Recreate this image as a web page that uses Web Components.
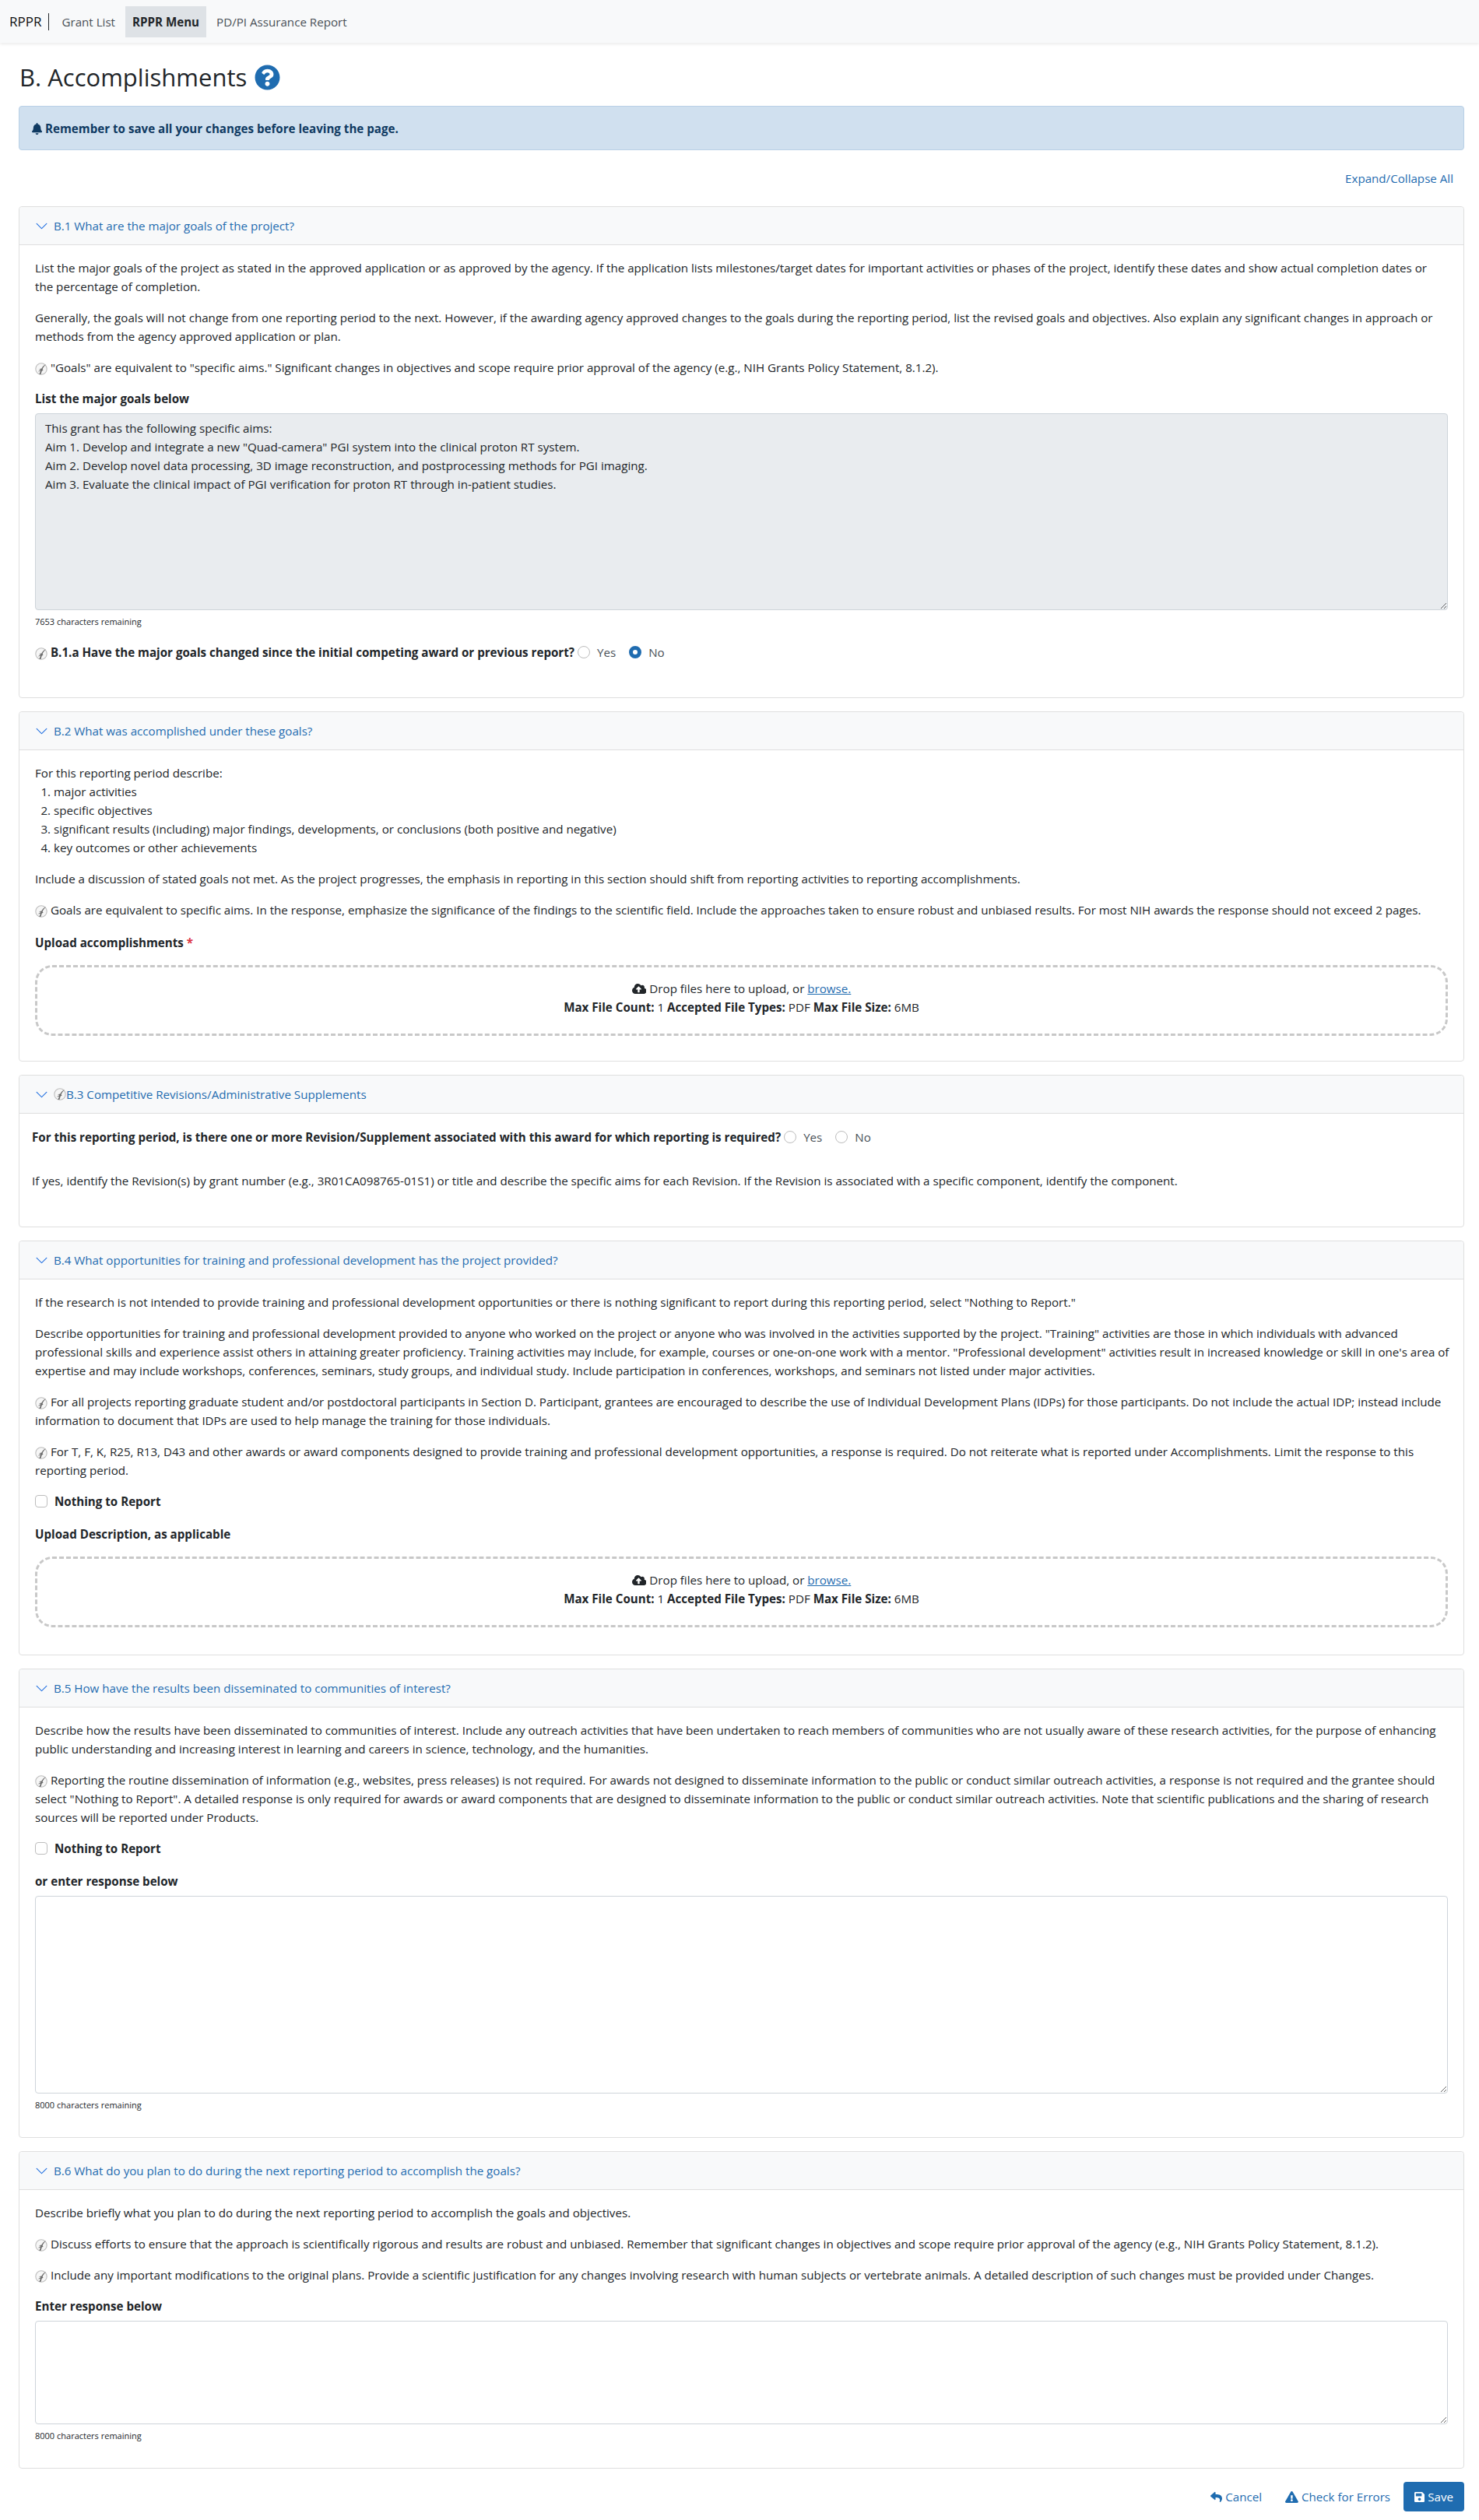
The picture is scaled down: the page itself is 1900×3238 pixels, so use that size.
<!DOCTYPE html>
<html lang="en">
<head>
<meta charset="utf-8">
<title>RPPR - B. Accomplishments</title>
<style>
  html, body { margin: 0; padding: 0; background: #fff; }
  body { font: 15.15px/24px "Open Sans", "Noto Sans", sans-serif; color: #212529; }
  main { display: block; padding: 0 19px 12px 24px; }
  acc-card p { margin: 0 0 16px; white-space: nowrap; }
  acc-card ol { margin: 0 0 16px; padding-left: 24px; }
  acc-card strong { font-weight: 700; }
  .label { font-weight: 700; margin-bottom: 7px; }
  .label.up { margin-bottom: 17px; }
  .req { color: #dc3545; }
</style>
</head>
<body>
<app-navbar></app-navbar>
<main>
  <page-title>B. Accomplishments</page-title>
  <page-alert>Remember to save all your changes before leaving the page.</page-alert>
  <expand-link>Expand/Collapse All</expand-link>

  <acc-card heading="B.1 What are the major goals of the project?">
    <p>List the major goals of the project as stated in the approved application or as approved by the agency. If the application lists milestones/target dates for important activities or phases of the project, identify these dates and show actual completion dates or<br>the percentage of completion.</p>
    <p>Generally, the goals will not change from one reporting period to the next. However, if the awarding agency approved changes to the goals during the reporting period, list the revised goals and objectives. Also explain any significant changes in approach or<br>methods from the agency approved application or plan.</p>
    <p><nih-mark></nih-mark> "Goals" are equivalent to "specific aims." Significant changes in objectives and scope require prior approval of the agency (e.g., NIH Grants Policy Statement, 8.1.2).</p>
    <div class="label">List the major goals below</div>
    <text-box rows-height="253" count="7653 characters remaining" disabled>This grant has the following specific aims:
Aim 1. Develop and integrate a new "Quad-camera" PGI system into the clinical proton RT system.
Aim 2. Develop novel data processing, 3D image reconstruction, and postprocessing methods for PGI imaging.
Aim 3. Evaluate the clinical impact of PGI verification for proton RT through in-patient studies.</text-box>
    <yes-no checked="no" style="margin:19px 0 30px"><nih-mark></nih-mark> B.1.a Have the major goals changed since the initial competing award or previous report?</yes-no>
  </acc-card>

  <acc-card heading="B.2 What was accomplished under these goals?">
    <div>For this reporting period describe:</div>
    <ol>
      <li>major activities</li>
      <li>specific objectives</li>
      <li>significant results (including) major findings, developments, or conclusions (both positive and negative)</li>
      <li>key outcomes or other achievements</li>
    </ol>
    <p>Include a discussion of stated goals not met. As the project progresses, the emphasis in reporting in this section should shift from reporting activities to reporting accomplishments.</p>
    <p style="margin-bottom:18px"><nih-mark></nih-mark> Goals are equivalent to specific aims. In the response, emphasize the significance of the findings to the scientific field. Include the approaches taken to ensure robust and unbiased results. For most NIH awards the response should not exceed 2 pages.</p>
    <div class="label up">Upload accomplishments <span class="req">*</span></div>
    <drop-zone style="margin-bottom:16px"></drop-zone>
  </acc-card>

  <acc-card heading="B.3 Competitive Revisions/Administrative Supplements" marked style="--inset:16px">
    <yes-no style="margin:1px 0 32px">For this reporting period, is there one or more Revision/Supplement associated with this award for which reporting is required?</yes-no>
    <p style="margin-bottom:31px">If yes, identify the Revision(s) by grant number (e.g., 3R01CA098765-01S1) or title and describe the specific aims for each Revision. If the Revision is associated with a specific component, identify the component.</p>
  </acc-card>

  <acc-card heading="B.4 What opportunities for training and professional development has the project provided?">
    <p>If the research is not intended to provide training and professional development opportunities or there is nothing significant to report during this reporting period, select "Nothing to Report."</p>
    <p>Describe opportunities for training and professional development provided to anyone who worked on the project or anyone who was involved in the activities supported by the project. "Training" activities are those in which individuals with advanced<br>professional skills and experience assist others in attaining greater proficiency. Training activities may include, for example, courses or one-on-one work with a mentor. "Professional development" activities result in increased knowledge or skill in one's area of<br>expertise and may include workshops, conferences, seminars, study groups, and individual study. Include participation in conferences, workshops, and seminars not listed under major activities.</p>
    <p><nih-mark></nih-mark> For all projects reporting graduate student and/or postdoctoral participants in Section D. Participant, grantees are encouraged to describe the use of Individual Development Plans (IDPs) for those participants. Do not include the actual IDP; instead include<br>information to document that IDPs are used to help manage the training for those individuals.</p>
    <p><nih-mark></nih-mark> For T, F, K, R25, R13, D43 and other awards or award components designed to provide training and professional development opportunities, a response is required. Do not reiterate what is reported under Accomplishments. Limit the response to this<br>reporting period.</p>
    <check-row>Nothing to Report</check-row>
    <div class="label" style="margin-bottom:17px">Upload Description, as applicable</div>
    <drop-zone style="margin-bottom:19px"></drop-zone>
  </acc-card>

  <acc-card heading="B.5 How have the results been disseminated to communities of interest?">
    <p>Describe how the results have been disseminated to communities of interest. Include any outreach activities that have been undertaken to reach members of communities who are not usually aware of these research activities, for the purpose of enhancing<br>public understanding and increasing interest in learning and careers in science, technology, and the humanities.</p>
    <p><nih-mark></nih-mark> Reporting the routine dissemination of information (e.g., websites, press releases) is not required. For awards not designed to disseminate information to the public or conduct similar outreach activities, a response is not required and the grantee should<br>select "Nothing to Report". A detailed response is only required for awards or award components that are designed to disseminate information to the public or conduct similar outreach activities. Note that scientific publications and the sharing of research<br>sources will be reported under Products.</p>
    <check-row>Nothing to Report</check-row>
    <div class="label">or enter response below</div>
    <text-box rows-height="254" count="8000 characters remaining" style="margin-bottom:17px"></text-box>
  </acc-card>

  <acc-card heading="B.6 What do you plan to do during the next reporting period to accomplish the goals?">
    <p>Describe briefly what you plan to do during the next reporting period to accomplish the goals and objectives.</p>
    <p><nih-mark></nih-mark> Discuss efforts to ensure that the approach is scientifically rigorous and results are robust and unbiased. Remember that significant changes in objectives and scope require prior approval of the agency (e.g., NIH Grants Policy Statement, 8.1.2).</p>
    <p><nih-mark></nih-mark> Include any important modifications to the original plans. Provide a scientific justification for any changes involving research with human subjects or vertebrate animals. A detailed description of such changes must be provided under Changes.</p>
    <div class="label">Enter response below</div>
    <text-box rows-height="133" count="8000 characters remaining" style="margin-bottom:17px"></text-box>
  </acc-card>

  <action-bar></action-bar>
</main>

<script>
// font awesome style glyphs, viewBox and path
const ICONS = {
  bell: ['0 0 448 512', 'M224 512c35.32 0 63.97-28.65 63.97-64H160.03c0 35.35 28.65 64 63.97 64zm215.39-149.71c-19.32-20.76-55.47-51.99-55.47-154.29 0-77.7-54.48-139.9-127.94-155.16V32c0-17.67-14.32-32-31.98-32s-31.98 14.33-31.98 32v20.84C118.56 68.1 64.08 130.3 64.08 208c0 102.3-36.15 133.53-55.47 154.29-6 6.45-8.66 14.16-8.61 21.71.11 16.4 12.98 32 32.1 32h383.8c19.12 0 32-15.6 32.1-32 .05-7.55-2.61-15.27-8.61-21.71z'],
  cloud: ['0 0 640 512', 'M537.6 226.6c4.1-10.7 6.4-22.4 6.4-34.6 0-53-43-96-96-96-19.7 0-38.1 6-53.3 16.2C367 64.2 315.3 32 256 32c-88.4 0-160 71.6-160 160 0 2.7.1 5.4.2 8.1C40.2 219.8 0 273.2 0 336c0 79.5 64.5 144 144 144h368c70.7 0 128-57.3 128-128 0-61.9-44-113.6-102.4-125.4zM393.4 288H328v112c0 8.8-7.2 16-16 16h-48c-8.8 0-16-7.2-16-16V288h-65.4c-14.3 0-21.4-17.2-11.3-27.3l105.4-105.4c6.2-6.2 16.4-6.2 22.6 0l105.4 105.4c10.1 10.1 2.9 27.3-11.3 27.3z'],
  reply: ['0 0 512 512', 'M8.309 189.836L184.313 37.851C199.719 24.546 224 35.347 224 56.015v80.053c160.629 1.839 288 34.032 288 186.258 0 61.441-39.581 122.309-83.333 154.132-13.653 9.931-33.111-2.533-28.077-18.631 45.344-145.012-21.507-183.51-176.59-185.742V360c0 20.7-24.3 31.453-39.687 18.164l-176.004-152c-11.071-9.562-11.086-26.753 0-36.328z'],
  warn: ['0 0 576 512', 'M569.517 440.013C587.975 472.007 564.806 512 527.94 512H48.054c-36.937 0-59.999-40.055-41.577-71.987L246.423 24.028c18.467-32.009 64.72-31.951 83.154 0l239.94 416.985zM288 354c-25.405 0-46 20.595-46 46s20.595 46 46 46 46-20.595 46-46-20.595-46-46-46zm-43.673-165.346l7.418 136c.347 6.364 5.609 11.346 11.982 11.346h48.546c6.373 0 11.635-4.982 11.982-11.346l7.418-136c.375-6.874-5.098-12.654-11.982-12.654h-63.383c-6.884 0-12.356 5.78-11.981 12.654z'],
  save: ['0 0 448 512', 'M433.941 129.941l-83.882-83.882A48 48 0 0 0 316.118 32H48C21.49 32 0 53.49 0 80v352c0 26.51 21.49 48 48 48h352c26.51 0 48-21.49 48-48V163.882a48 48 0 0 0-14.059-33.941zM224 416c-35.346 0-64-28.654-64-64 0-35.346 28.654-64 64-64s64 28.654 64 64c0 35.346-28.654 64-64 64zm96-304.52V212c0 6.627-5.373 12-12 12H76c-6.627 0-12-5.373-12-12V108c0-6.627 5.373-12 12-12h228.52c3.183 0 6.235 1.264 8.485 3.515l3.48 3.48A11.996 11.996 0 0 1 320 111.48z'],
  question: ['0 0 512 512', 'M504 256c0 136.997-111.043 248-248 248S8 392.997 8 256C8 119.083 119.043 8 256 8s248 111.083 248 248zM262.655 90c-54.497 0-89.255 22.957-116.549 63.758-3.536 5.286-2.353 12.415 2.715 16.258l34.699 26.31c5.205 3.947 12.621 3.008 16.665-2.122 17.864-22.658 30.113-35.797 57.303-35.797 20.429 0 45.698 13.148 45.698 32.958 0 14.976-12.363 22.667-32.534 33.976C247.128 238.528 216 254.941 216 296v4c0 6.627 5.373 12 12 12h56c6.627 0 12-5.373 12-12v-1.333c0-28.462 83.186-29.647 83.186-106.667 0-58.002-60.165-102-116.531-102zM256 338c-25.365 0-46 20.635-46 46 0 25.364 20.635 46 46 46s46-20.636 46-46c0-25.365-20.635-46-46-46z'],
  chevron: ['0 0 16 16', 'M1.646 4.646a.5.5 0 0 1 .708 0L8 10.293l5.646-5.647a.5.5 0 0 1 .708.708l-6 6a.5.5 0 0 1-.708 0l-6-6a.5.5 0 0 1 0-.708z']
};

class FaIcon extends HTMLElement {
  connectedCallback() {
    const [box, d] = ICONS[this.getAttribute('name')];
    const size = this.getAttribute('size') || 16;
    const [, , w, h] = box.split(' ').map(Number);
    this.attachShadow({ mode: 'open' });
    this.shadowRoot.innerHTML = `
      <style>
        :host { display: inline-flex; vertical-align: -2px; line-height: 0; }
        svg { fill: currentColor; display: block; }
      </style>
      <svg viewBox="${box}" width="${size * w / h}" height="${size}"><path d="${d}"/></svg>
    `;
  }
}

// the small grey HHS seal used in front of the NIH specific notes
class NihMark extends HTMLElement {
  connectedCallback() {
    this.attachShadow({ mode: 'open' });
    this.shadowRoot.innerHTML = `
      <style>
        :host { display: inline-block; width: 16px; height: 16px; vertical-align: -4px; }
        svg { display: block; }
      </style>
      <svg viewBox="0 0 16 16" width="16" height="16">
        <circle cx="8" cy="8" r="7.2" fill="#f6f6f6" stroke="#bdbdbd" stroke-width="1.1"/>
        <path d="M14 2.2 C11 3.4 9.4 5.4 8.4 7.6 L5 8.2 L7.6 9 L3.6 11.6 L7 10.8 L5.4 15 L7.4 15 L8.8 10.6 L10.6 9.8 L9.6 8.4 C10.4 6 12 4 14 2.2Z" fill="#6a6a6a"/>
      </svg>
    `;
  }
}

class AppNavbar extends HTMLElement {
  connectedCallback() {
    this.attachShadow({ mode: 'open' });
    this.shadowRoot.innerHTML = `
      <style>
        :host {
          display: flex;
          align-items: center;
          height: 55px;
          box-sizing: border-box;
          padding: 0 12px;
          background: #f8f9fa;
          box-shadow: 0 2px 4px rgba(0, 0, 0, 0.08);
        }
        .brand {
          font-size: 17px;
          font-weight: 500;
          color: #111;
          padding-right: 9px;
          margin-right: 7px;
          line-height: 22px;
          border-right: 1px solid #212529;
        }
        a {
          color: #495057;
          text-decoration: none;
          padding: 8px 9px;
          line-height: 24px;
          margin-right: 4px;
        }
        a.on {
          font-weight: 700;
          color: #212529;
          background: #dee2e6;
        }
      </style>
      <span class="brand">RPPR</span>
      <a href="#">Grant List</a>
      <a href="#" class="on">RPPR Menu</a>
      <a href="#">PD/PI Assurance Report</a>
    `;
  }
}

class PageTitle extends HTMLElement {
  connectedCallback() {
    this.attachShadow({ mode: 'open' });
    this.shadowRoot.innerHTML = `
      <style>
        :host {
          display: flex;
          align-items: center;
          gap: 10px;
          height: 38px;
          margin: 25px 0 18px 1px;
          font-size: 31px;
          line-height: 38px;
          font-weight: 500;
          color: #212529;
        }
        fa-icon { color: #1f6cb0; }
      </style>
      <slot></slot>
      <fa-icon name="question" size="33"></fa-icon>
    `;
  }
}

class PageAlert extends HTMLElement {
  connectedCallback() {
    this.attachShadow({ mode: 'open' });
    this.shadowRoot.innerHTML = `
      <style>
        :host {
          display: block;
          box-sizing: border-box;
          height: 57px;
          padding: 16px;
          background: #d0e0ef;
          border: 1px solid #b9d0e6;
          border-radius: 4px;
          color: #0f3a62;
          font-weight: 700;
        }
      </style>
      <fa-icon name="bell" size="15"></fa-icon>
      <slot></slot>
    `;
  }
}

class ExpandLink extends HTMLElement {
  connectedCallback() {
    this.attachShadow({ mode: 'open' });
    this.shadowRoot.innerHTML = `
      <style>
        :host {
          display: flex;
          justify-content: flex-end;
          height: 24px;
          padding: 24px 14px 24px 0;
        }
        a { color: #1f6cb0; text-decoration: none; }
      </style>
      <a href="#"><slot></slot></a>
    `;
  }
}

class AccCard extends HTMLElement {
  connectedCallback() {
    const mark = this.hasAttribute('marked') ? '<nih-mark></nih-mark>' : '';
    this.attachShadow({ mode: 'open' });
    this.shadowRoot.innerHTML = `
      <style>
        :host {
          display: block;
          border: 1px solid #dfdfdf;
          border-radius: 4px;
          margin-bottom: 17px;
        }
        header {
          display: flex;
          align-items: center;
          height: 48px;
          padding: 0 20px;
          background: #f8f9fa;
          border-bottom: 1px solid #dfdfdf;
          border-radius: 4px 4px 0 0;
          color: #1f6cb0;
        }
        .chev { color: #1b6ce0; margin-right: 7px; display: inline-flex; }
        .body { padding: 17px var(--inset, 20px) 16px; }
      </style>
      <header>
        <span class="chev"><fa-icon name="chevron" size="17"></fa-icon></span>
        ${mark}<span>${this.getAttribute('heading')}</span>
      </header>
      <div class="body"><slot></slot></div>
    `;
  }
}

class TextBox extends HTMLElement {
  connectedCallback() {
    const off = this.hasAttribute('disabled');
    const area = document.createElement('textarea');
    area.textContent = this.textContent;
    area.disabled = off;
    area.style.height = this.getAttribute('rows-height') + 'px';
    this.attachShadow({ mode: 'open' });
    this.shadowRoot.innerHTML = `
      <style>
        :host { display: block; }
        textarea {
          display: block;
          box-sizing: border-box;
          width: 100%;
          padding: 6px 12px;
          font: inherit;
          color: #212529;
          background: ${off ? '#e9ecef' : '#fff'};
          border: 1px solid #ced4da;
          border-radius: 4px;
          outline: none;
        }
        small { display: block; font-size: 11px; line-height: 16px; margin-top: 7px; }
      </style>
      <small>${this.getAttribute('count')}</small>
    `;
    this.shadowRoot.insertBefore(area, this.shadowRoot.querySelector('small'));
  }
}

class DropZone extends HTMLElement {
  connectedCallback() {
    this.attachShadow({ mode: 'open' });
    this.shadowRoot.innerHTML = `
      <style>
        :host {
          display: block;
          box-sizing: border-box;
          height: 91px;
          padding: 15px;
          border: 3px dashed #c8c8c8;
          border-radius: 22px;
          text-align: center;
        }
        a { color: #1f6cb0; }
        b { font-weight: 700; }
      </style>
      <div><fa-icon name="cloud" size="15"></fa-icon> Drop files here to upload, or <a href="#">browse.</a></div>
      <div><b>Max File Count:</b> 1 <b>Accepted File Types:</b> PDF <b>Max File Size:</b> 6MB</div>
    `;
  }
}

class YesNo extends HTMLElement {
  connectedCallback() {
    const picked = this.getAttribute('checked');
    this.attachShadow({ mode: 'open' });
    this.shadowRoot.innerHTML = `
      <style>
        :host { display: flex; align-items: center; }
        .q { font-weight: 700; }
        .opt { display: inline-flex; align-items: center; margin-right: 13px; color: #495057; }
        i {
          display: block;
          box-sizing: border-box;
          width: 16px;
          height: 16px;
          margin: 0 9px 0 4px;
          border: 1px solid #bdbdbd;
          border-radius: 50%;
          background: #fff;
        }
        i.on { border: 5px solid #1f6cb0; }
      </style>
      <span class="q"><slot></slot></span>
      <span class="opt"><i class="${picked === 'yes' ? 'on' : ''}"></i>Yes</span>
      <span class="opt"><i class="${picked === 'no' ? 'on' : ''}"></i>No</span>
    `;
  }
}

class CheckRow extends HTMLElement {
  connectedCallback() {
    this.attachShadow({ mode: 'open' });
    this.shadowRoot.innerHTML = `
      <style>
        :host { display: flex; align-items: center; font-weight: 700; margin-bottom: 18px; }
        i {
          display: block;
          box-sizing: border-box;
          width: 16px;
          height: 16px;
          margin-right: 9px;
          border: 1px solid #bdbdbd;
          border-radius: 4px;
        }
      </style>
      <i></i><slot></slot>
    `;
  }
}

class ActionBar extends HTMLElement {
  connectedCallback() {
    this.attachShadow({ mode: 'open' });
    this.shadowRoot.innerHTML = `
      <style>
        :host {
          display: flex;
          justify-content: flex-end;
          align-items: center;
          gap: 17px;
        }
        a, button {
          display: inline-flex;
          align-items: center;
          gap: 4px;
          height: 38px;
          font: inherit;
          color: #1f6cb0;
          text-decoration: none;
          border: 0;
        }
        .back { margin-right: 13px; }
        button {
          padding: 0 14px;
          color: #fff;
          background: #1f6cb0;
          border-radius: 4px;
        }
      </style>
      <a href="#" class="back"><fa-icon name="reply" size="15"></fa-icon>Cancel</a>
      <a href="#"><fa-icon name="warn" size="15"></fa-icon>Check for Errors</a>
      <button type="button"><fa-icon name="save" size="15"></fa-icon>Save</button>
    `;
  }
}

customElements.define('fa-icon', FaIcon);
customElements.define('nih-mark', NihMark);
customElements.define('app-navbar', AppNavbar);
customElements.define('page-title', PageTitle);
customElements.define('page-alert', PageAlert);
customElements.define('expand-link', ExpandLink);
customElements.define('acc-card', AccCard);
customElements.define('text-box', TextBox);
customElements.define('drop-zone', DropZone);
customElements.define('yes-no', YesNo);
customElements.define('check-row', CheckRow);
customElements.define('action-bar', ActionBar);
</script>
</body>
</html>
